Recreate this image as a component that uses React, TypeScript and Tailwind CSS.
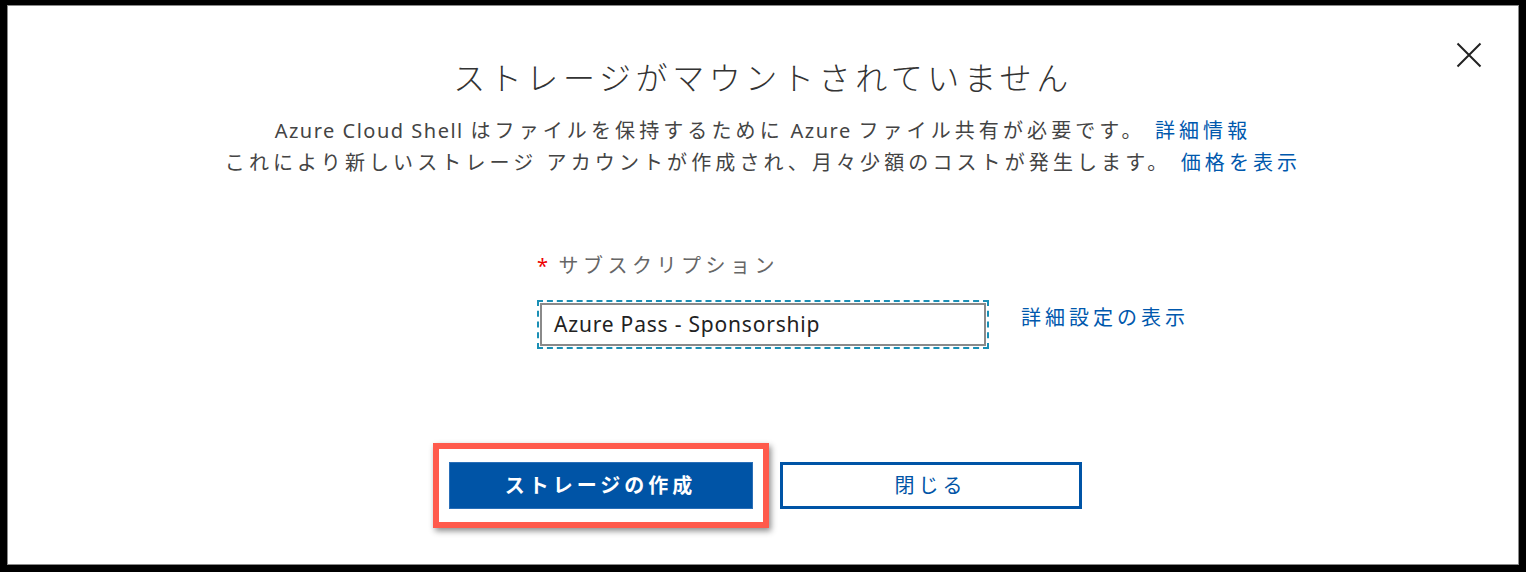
const jp = { fontFamily: '"Noto Sans", "Noto Sans CJK JP", sans-serif' };

function Latin({ children }: { children: React.ReactNode }) {
  return <span className="tracking-[1.5px]">{children}</span>;
}

export default function App() {
  return (
    <div className="h-[572px] w-[1526px] bg-black pt-[5px] pl-[7px] pr-[7px] pb-[7px]" style={jp}>
      <div className="flex h-full flex-col border border-[#8a8a8a] bg-white">
        {/* header */}
        <div className="relative flex justify-center pt-[50px]">
          <h1 className="text-[32px] leading-[44px] font-light tracking-[4.6px] text-[#333]">
            ストレージがマウントされていません
          </h1>
          <button className="absolute right-[36px] top-[36px] text-[#222]">
            <svg width="26" height="26" viewBox="0 0 26 26" fill="none" stroke="currentColor" strokeWidth="2">
              <path d="M1.5 1.5L24.5 24.5M24.5 1.5L1.5 24.5" />
            </svg>
          </button>
        </div>

        <div className="mt-[15px] flex flex-col items-center text-[20px] leading-[32px] tracking-[4.1px] text-[#444]">
          <p>
            <Latin>Azure Cloud Shell </Latin>はファイルを保持するために<Latin> Azure </Latin>ファイル共有が必要です。{' '}
            <a className="text-[#0058ad]">詳細情報</a>
          </p>
          <p>
            これにより新しいストレージ アカウントが作成され、月々少額のコストが発生します。{' '}
            <a className="text-[#0058ad]">価格を表示</a>
          </p>
        </div>

        {/* form */}
        <div className="mt-[73px] grid grid-cols-[1fr_452px_1fr]">
          <div />
          <div className="flex flex-col">
            <label className="flex items-center text-[20px] leading-[28px] tracking-[4.5px] text-[#666]">
              <span className="mr-[6px] text-[#e00]">*</span>
              サブスクリプション
            </label>
            <div className="mt-[20px] h-[49px] border-2 border-dashed border-[#1a8fb5] p-px">
              <div className="flex h-full items-center border-2 border-[#8a8a8a] px-[12px] text-[21px] tracking-[0.8px] text-[#222]">
                Azure Pass - Sponsorship
              </div>
            </div>
          </div>
          <div className="flex items-end pb-[17px] pl-[32px]">
            <a className="text-[20px] leading-[28px] tracking-[4px] text-[#0058ad]">詳細設定の表示</a>
          </div>
        </div>

        {/* actions */}
        <div className="mt-[94px] flex items-center justify-center gap-[11px] pr-[12px]">
          <div className="border-[6px] border-[#ff5a4c] px-[10px] py-[13px] shadow-[2px_3px_6px_rgba(0,0,0,0.45)]">
            <button className="block h-[47px] w-[304px] bg-[#0054a6] text-[20px] font-bold tracking-[4px] text-white shadow-[inset_0_0_0_1px_#2a6fb8]">
              ストレージの作成
            </button>
          </div>
          <button className="h-[47px] w-[302px] border-[3px] border-[#0054a6] bg-white text-[20px] tracking-[4px] text-[#0054a6]">
            閉じる
          </button>
        </div>
      </div>
    </div>
  );
}
